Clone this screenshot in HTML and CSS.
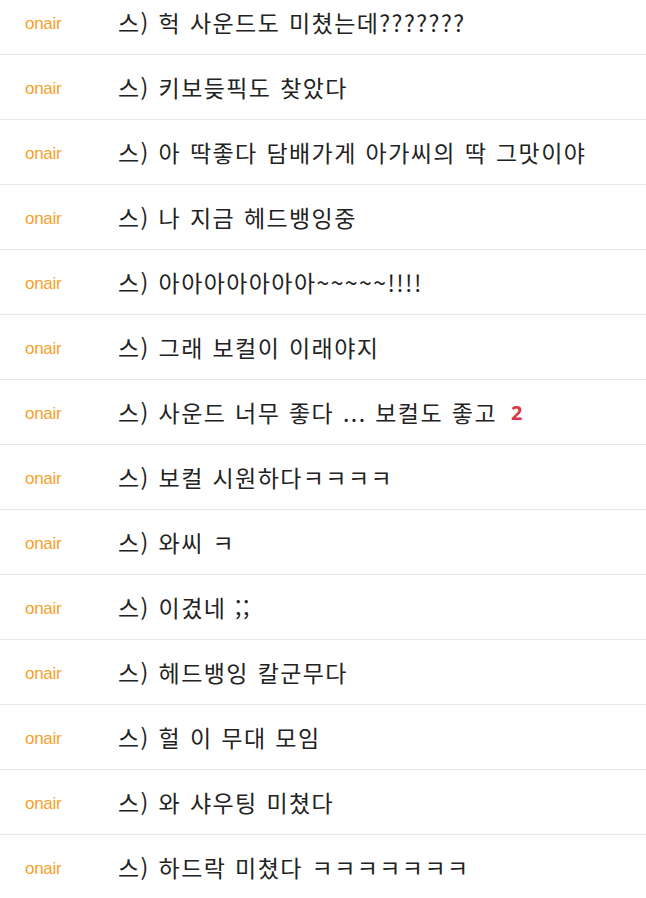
FILE: index.html
```html
<!DOCTYPE html>
<html lang="ko">
<head>
<meta charset="utf-8">
<link rel="stylesheet" href="styles.css">
</head>
<body>
<ul class="list">
  <li class="row"><span class="src">onair</span><span class="msg">스) 헉 사운드도 미쳤는데???????</span></li>
  <li class="row"><span class="src">onair</span><span class="msg">스) 키보듲픽도 찾았다</span></li>
  <li class="row"><span class="src">onair</span><span class="msg">스) 아 딱좋다 담배가게 아가씨의 딱 그맛이야</span></li>
  <li class="row"><span class="src">onair</span><span class="msg">스) 나 지금 헤드뱅잉중</span></li>
  <li class="row"><span class="src">onair</span><span class="msg">스) 아아아아아아아~~~~~!!!!</span></li>
  <li class="row"><span class="src">onair</span><span class="msg">스) 그래 보컬이 이래야지</span></li>
  <li class="row"><span class="src">onair</span><span class="msg">스) 사운드 너무 좋다 ... 보컬도 좋고</span><span class="count">2</span></li>
  <li class="row"><span class="src">onair</span><span class="msg">스) 보컬 시원하다ㅋㅋㅋㅋ</span></li>
  <li class="row"><span class="src">onair</span><span class="msg">스) 와씨 ㅋ</span></li>
  <li class="row"><span class="src">onair</span><span class="msg">스) 이겼네 ;;</span></li>
  <li class="row"><span class="src">onair</span><span class="msg">스) 헤드뱅잉 칼군무다</span></li>
  <li class="row"><span class="src">onair</span><span class="msg">스) 헐 이 무대 모임</span></li>
  <li class="row"><span class="src">onair</span><span class="msg">스) 와 샤우팅 미쳤다</span></li>
  <li class="row"><span class="src">onair</span><span class="msg">스) 하드락 미쳤다 ㅋㅋㅋㅋㅋㅋㅋ</span></li>
</ul>
</body>
</html>
```
FILE: styles.css
```css
html, body {
  margin: 0;
  padding: 0;
  background: #fff;
}
body {
  overflow: hidden;
}
.list {
  list-style: none;
  margin: -10px 0 0 0;
  padding: 0;
}
.row {
  display: flex;
  align-items: center;
  height: 64px;
  border-bottom: 1px solid #e8e8e8;
}
.src {
  width: 93px;
  padding-left: 25px;
  padding-top: 4px;
  flex: none;
  font-family: "Liberation Sans", Arial, sans-serif;
  font-size: 17px;
  color: #f7a02a;
  letter-spacing: -0.3px;
}
.msg {
  font-family: "Noto Sans CJK KR", "Noto Sans", sans-serif;
  font-size: 23px;
  letter-spacing: 1.4px;
  word-spacing: 1px;
  color: #222;
}
.count {
  margin-left: 14px;
  font-family: "Noto Sans", "Liberation Sans", sans-serif;
  font-weight: 700;
  font-size: 20px;
  color: #dc3545;
}
```
